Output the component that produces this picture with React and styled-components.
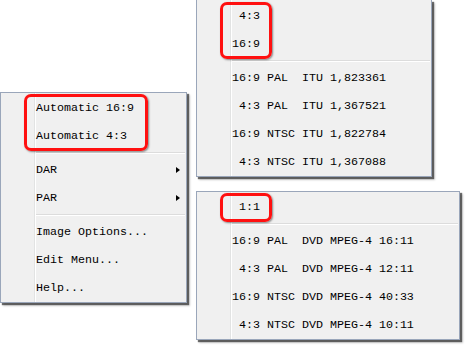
import styled, { createGlobalStyle } from "styled-components"

const Global = createGlobalStyle`
  body {
    margin: 0;
    background: #ffffff;
    font-family: "Liberation Mono", "DejaVu Sans Mono", monospace;
  }
`

const Page = styled.div`
  display: flex;
  gap: 9px;
  width: 465px;
  height: 346px;
  overflow: hidden;
`

const Column = styled.div`
  display: flex;
  flex-direction: column;
  gap: 14px;
  padding-top: ${p => p.top || 0}px;
`

const Menu = styled.div`
  box-sizing: border-box;
  width: ${p => p.width}px;
  background-color: #f0f0f0;
  background-image: linear-gradient(
    to right,
    transparent 33px,
    #e2e3e3 33px,
    #e2e3e3 34px,
    #ffffff 34px,
    #ffffff 35px,
    transparent 35px
  );
  border: 1px solid #9aa6ba;
  border-top: ${p => (p.cut ? "none" : "1px solid #9aa6ba")};
  padding: ${p => (p.cut ? 2 : 1)}px 1px 0 0;
  box-shadow: 2px 2px 1px rgba(0, 0, 0, 0.55), 3px 3px 2px rgba(0, 0, 0, 0.2);
`

const Group = styled.div`
  position: relative;
  &::after {
    content: "";
    position: absolute;
    left: 23px;
    top: 0;
    width: ${p => p.boxWidth}px;
    bottom: -1px;
    box-sizing: border-box;
    border: 3px solid #ff1010;
    border-radius: 7px;
    box-shadow: 1px 1px 2px rgba(0, 0, 0, 0.45);
    pointer-events: none;
  }
`

const Item = styled.div`
  display: flex;
  align-items: center;
  height: 28px;
  padding-left: 35px;
  padding-right: 5px;
  font-size: 11.67px;
  color: #000;
  white-space: pre;
`

const Arrow = styled.span`
  margin-left: auto;
  width: 0;
  height: 0;
  border-left: 4px solid #000;
  border-top: 3.5px solid transparent;
  border-bottom: 3.5px solid transparent;
`

const Separator = styled.div`
  height: 6px;
  margin-left: 35px;
  background: linear-gradient(
    to bottom,
    transparent 2px,
    #dcdcdc 2px,
    #dcdcdc 3px,
    #ffffff 3px,
    #ffffff 4px,
    transparent 4px
  );
`

function MenuItem ({ label, sub }) {
  return (
    <Item>
      {label}
      {sub && <Arrow />}
    </Item>
  )
}

function App () {
  return (
    <>
      <Global />
      <Page>
        <Column top={92}>
          <Menu width={187}>
            <Group boxWidth={124}>
              <MenuItem label="Automatic 16:9" />
              <MenuItem label="Automatic 4:3" />
            </Group>
            <Separator />
            <MenuItem label="DAR" sub />
            <MenuItem label="PAR" sub />
            <Separator />
            <MenuItem label="Image Options..." />
            <MenuItem label="Edit Menu..." />
            <MenuItem label="Help..." />
          </Menu>
        </Column>
        <Column>
          <Menu width={236} cut>
            <Group boxWidth={52}>
              <MenuItem label=" 4:3" />
              <MenuItem label="16:9" />
            </Group>
            <Separator />
            <MenuItem label="16:9 PAL  ITU 1,823361" />
            <MenuItem label=" 4:3 PAL  ITU 1,367521" />
            <MenuItem label="16:9 NTSC ITU 1,822784" />
            <MenuItem label=" 4:3 NTSC ITU 1,367088" />
          </Menu>
          <Menu width={264}>
            <Group boxWidth={52}>
              <MenuItem label=" 1:1" />
            </Group>
            <Separator />
            <MenuItem label="16:9 PAL  DVD MPEG-4 16:11" />
            <MenuItem label=" 4:3 PAL  DVD MPEG-4 12:11" />
            <MenuItem label="16:9 NTSC DVD MPEG-4 40:33" />
            <MenuItem label=" 4:3 NTSC DVD MPEG-4 10:11" />
          </Menu>
        </Column>
      </Page>
    </>
  )
}

export default App
